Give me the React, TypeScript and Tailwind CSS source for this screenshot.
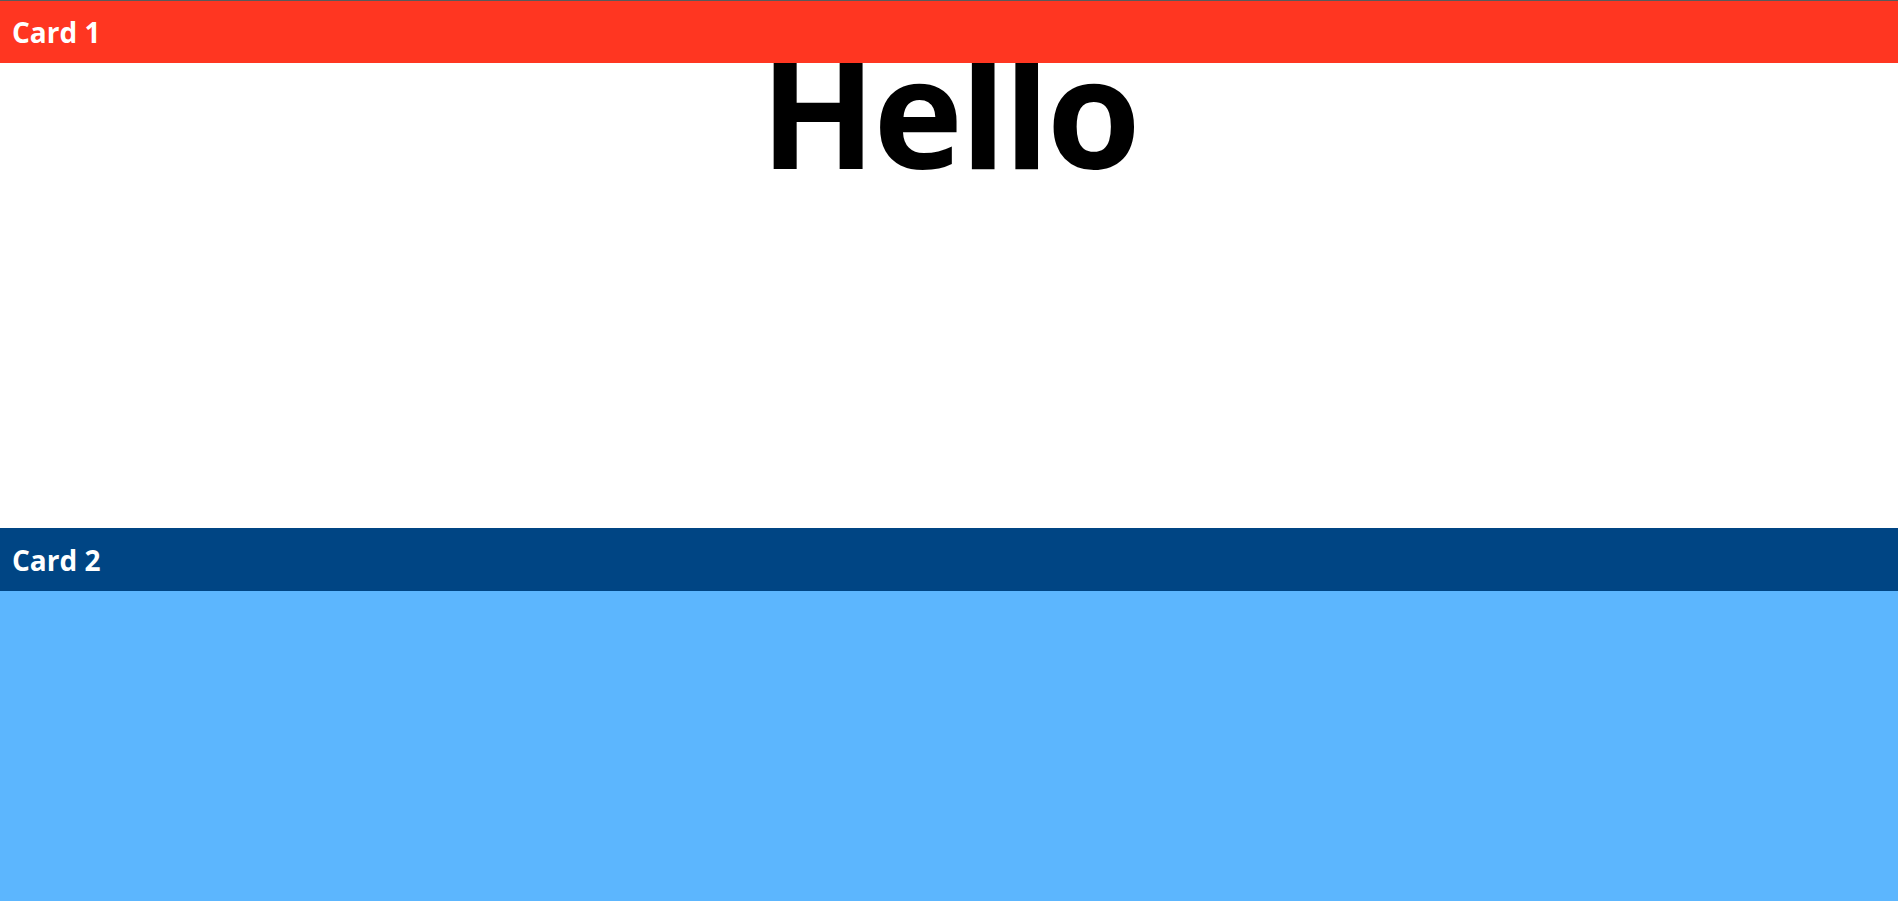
const cardFont = { fontFamily: '"Open Sans", "Noto Sans", sans-serif' };

export default function App() {
  return (
    <div className="min-h-screen border-t border-[#5a5a5a] bg-white" style={cardFont}>
      <section className="relative h-[527px] bg-white">
        <header className="relative z-10 flex h-[62px] items-center bg-[#ff3621] px-3">
          <h2 className="text-[28px] font-bold leading-none text-white">Card 1</h2>
        </header>
        <h1 className="-mt-[28px] text-center text-[152px] font-bold leading-none tracking-[-0.02em] text-black">
          Hello
        </h1>
      </section>
      <section className="min-h-[373px] bg-[#5cb6fe]">
        <header className="flex h-[63px] items-center bg-[#004584] px-3">
          <h2 className="text-[28px] font-bold leading-none text-white">Card 2</h2>
        </header>
      </section>
    </div>
  );
}
